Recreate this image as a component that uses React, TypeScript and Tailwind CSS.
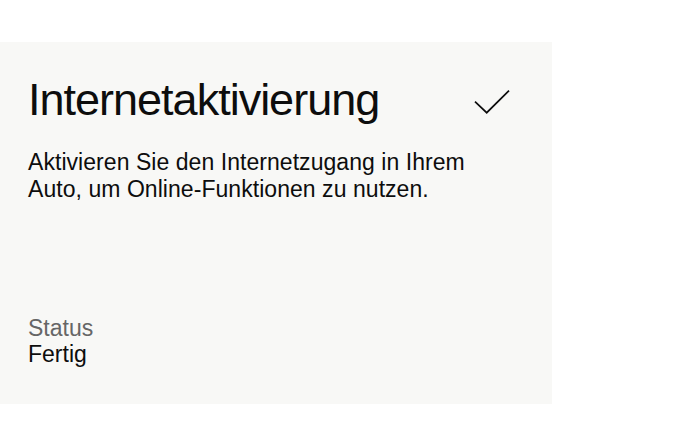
import React from "react";

export default function App() {
  return (
    <div className="w-[690px] h-[425px] bg-white pt-[42px]" style={{ fontFamily: '"Liberation Sans", Arial, sans-serif' }}>
      <div className="w-[552px] h-[362px] bg-[#f8f8f6] flex flex-col pl-[28px] pr-[40px] pt-[31px] pb-[37px] text-[#0d0d0d]">
        <div className="flex items-start">
          <h1 className="text-[45px] leading-[54px] tracking-[-1px] font-normal">Internetaktivierung</h1>
          <svg className="ml-auto mt-[15px]" width="40" height="28" viewBox="0 0 40 28" fill="none">
            <path d="M3 13.7 L14.7 24.7 L37 2.7" stroke="#0d0d0d" strokeWidth="1.7" />
          </svg>
        </div>
        <p className="mt-[22px] text-[23px] leading-[27px] tracking-[0.05px] w-[470px]">
          Aktivieren Sie den Internetzugang in Ihrem Auto, um Online-Funktionen zu nutzen.
        </p>
        <div className="mt-auto text-[23px] leading-[26px]">
          <div className="text-[#666666]">Status</div>
          <div>Fertig</div>
        </div>
      </div>
    </div>
  );
}
